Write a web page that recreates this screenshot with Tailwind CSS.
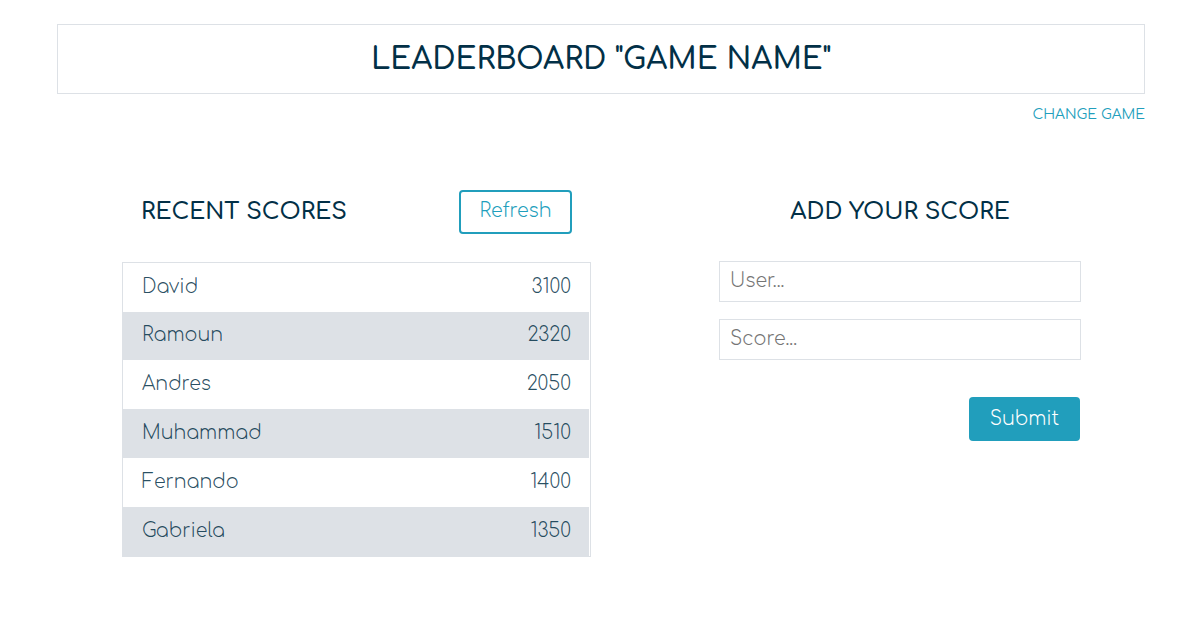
<!DOCTYPE html>
<html lang="en">
<head>
<meta charset="utf-8">
<meta name="viewport" content="width=device-width, initial-scale=1">
<title>Leaderboard</title>
<script src="https://cdn.jsdelivr.net/npm/@tailwindcss/browser@4"></script>
</head>
<body class="bg-white pt-6 pr-[55px] pb-6 pl-[57px] font-['Comfortaa','Inter',sans-serif] text-[19px] leading-7 font-light text-[#023047]">
<header>
  <h1 class="border border-[#dde1e6] pt-[15px] pb-[13px] text-center text-[30px] leading-10 font-semibold">LEADERBOARD "GAME NAME"</h1>
  <nav class="mt-[11px] flex justify-end"><a href="#" class="text-sm leading-5 font-normal text-[#219ebc]">CHANGE GAME</a></nav>
</header>
<main class="mt-[65px] grid grid-cols-[469fr_362fr] gap-32 pr-16 pl-[65px]">
  <section>
    <div class="flex h-11 items-center justify-between px-[19px]">
      <h2 class="text-[23px] leading-8 font-semibold">RECENT SCORES</h2>
      <button type="button" class="h-11 w-[113px] rounded border-2 border-[#219ebc] pb-0.5 text-[#219ebc]">Refresh</button>
    </div>
    <div class="mt-7 border border-[#dde1e6] pr-px">
      <table class="w-full text-[#023047]/85">
        <tbody>
          <tr class="h-[49px] even:bg-[#dde1e6]"><td class="pb-0.5 pl-[19px]">David</td><td class="pr-[18px] pb-0.5 text-right">3100</td></tr>
          <tr class="h-12 even:bg-[#dde1e6]"><td class="pb-0.5 pl-[19px]">Ramoun</td><td class="pr-[18px] pb-0.5 text-right">2320</td></tr>
          <tr class="h-[49px] even:bg-[#dde1e6]"><td class="pb-0.5 pl-[19px]">Andres</td><td class="pr-[18px] pb-0.5 text-right">2050</td></tr>
          <tr class="h-[49px] even:bg-[#dde1e6]"><td class="pb-0.5 pl-[19px]">Muhammad</td><td class="pr-[18px] pb-0.5 text-right">1510</td></tr>
          <tr class="h-[49px] even:bg-[#dde1e6]"><td class="pb-0.5 pl-[19px]">Fernando</td><td class="pr-[18px] pb-0.5 text-right">1400</td></tr>
          <tr class="h-[49px] even:bg-[#dde1e6]"><td class="pb-0.5 pl-[19px]">Gabriela</td><td class="pr-[18px] pb-0.5 text-right">1350</td></tr>
        </tbody>
      </table>
    </div>
  </section>
  <section>
    <div class="flex h-11 items-center justify-center">
      <h2 class="text-[23px] leading-8 font-semibold">ADD YOUR SCORE</h2>
    </div>
    <form class="mt-[27px] flex flex-col">
      <input type="text" aria-label="User" placeholder="User..." class="h-[41px] w-full border border-[#dde1e6] px-2.5 pb-0.5 placeholder:text-[#757575]">
      <input type="text" aria-label="Score" placeholder="Score..." class="mt-[17px] h-[41px] w-full border border-[#dde1e6] px-2.5 pb-0.5 placeholder:text-[#757575]">
      <button type="button" class="mt-[37px] mr-px h-11 w-[111px] self-end rounded bg-[#219ebc] text-white">Submit</button>
    </form>
  </section>
</main>
</body>
</html>
